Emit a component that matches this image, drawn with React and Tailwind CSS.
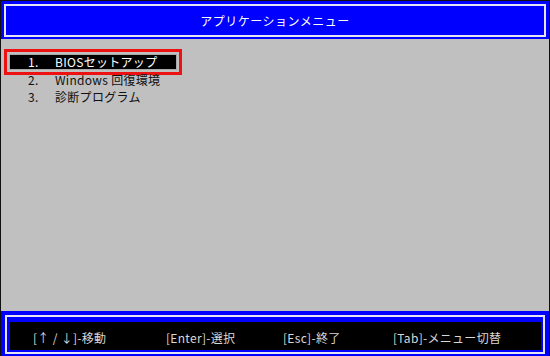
import React from 'react';

const font = { fontFamily: '"Noto Sans CJK JP", "DejaVu Sans", sans-serif' };

const menuItems = [
  { no: '1.', label: 'BIOSセットアップ' },
  { no: '2.', label: 'Windows 回復環境' },
  { no: '3.', label: '診断プログラム' },
];

const keys = [
  { text: '[↑ / ↓]-移動', w: 'w-[133px]' },
  { text: '[Enter]-選択', w: 'w-[117px]' },
  { text: '[Esc]-終了', w: 'w-[110px]' },
  { text: '[Tab]-メニュー切替', w: 'w-auto' },
];

export default function App() {
  return (
    <div
      className="w-[550px] h-[356px] flex flex-col bg-[#c0c0c0] overflow-hidden text-[12px] leading-none"
      style={font}
    >
      {/* Header */}
      <div className="h-[39px] shrink-0 bg-[#0000ff] border-t border-x border-[#101010] pt-[3px] px-[3px]">
        <div className="h-[33px] border-2 border-[#e4e4f4] flex items-center justify-center text-white tracking-[0.5px]">
          アプリケーションメニュー
        </div>
      </div>

      {/* Menu area */}
      <div className="flex-1 border-x border-[#101010] pt-[10px] pl-[3px]">
        <div className="w-[178px] h-[26px] border-[3px] border-[#ee1111] p-[2px] -mb-[4px]">
          <div className="h-full bg-black border border-[#a8a8a8] flex items-center text-white tracking-[0.3px]">
            <span className="w-[27px] pl-[18px] shrink-0 box-content">{menuItems[0].no}</span>
            <span>{menuItems[0].label}</span>
          </div>
        </div>
        {menuItems.slice(1).map((item) => (
          <div key={item.no} className="h-[17px] flex items-center text-[#101010] tracking-[0.3px]">
            <span className="w-[27px] pl-[24px] shrink-0 box-content">{item.no}</span>
            <span>{item.label}</span>
          </div>
        ))}
      </div>

      {/* Footer */}
      <div className="h-[45px] shrink-0 bg-[#0000ff] border-x border-[#101010] pt-[4px] pl-[4px] pr-[4px] pb-[2px]">
        <div className="h-full border-2 border-[#e4e4f4] pt-[5px] pl-[3px] pr-[2px] pb-[2px]">
          <div className="h-full bg-black flex items-center pl-[23px] pt-[3px] text-[#d8d8d8] tracking-[0.3px]">
            {keys.map((k) => (
              <span key={k.text} className={`${k.w} shrink-0`}>{k.text}</span>
            ))}
          </div>
        </div>
      </div>
    </div>
  );
}
